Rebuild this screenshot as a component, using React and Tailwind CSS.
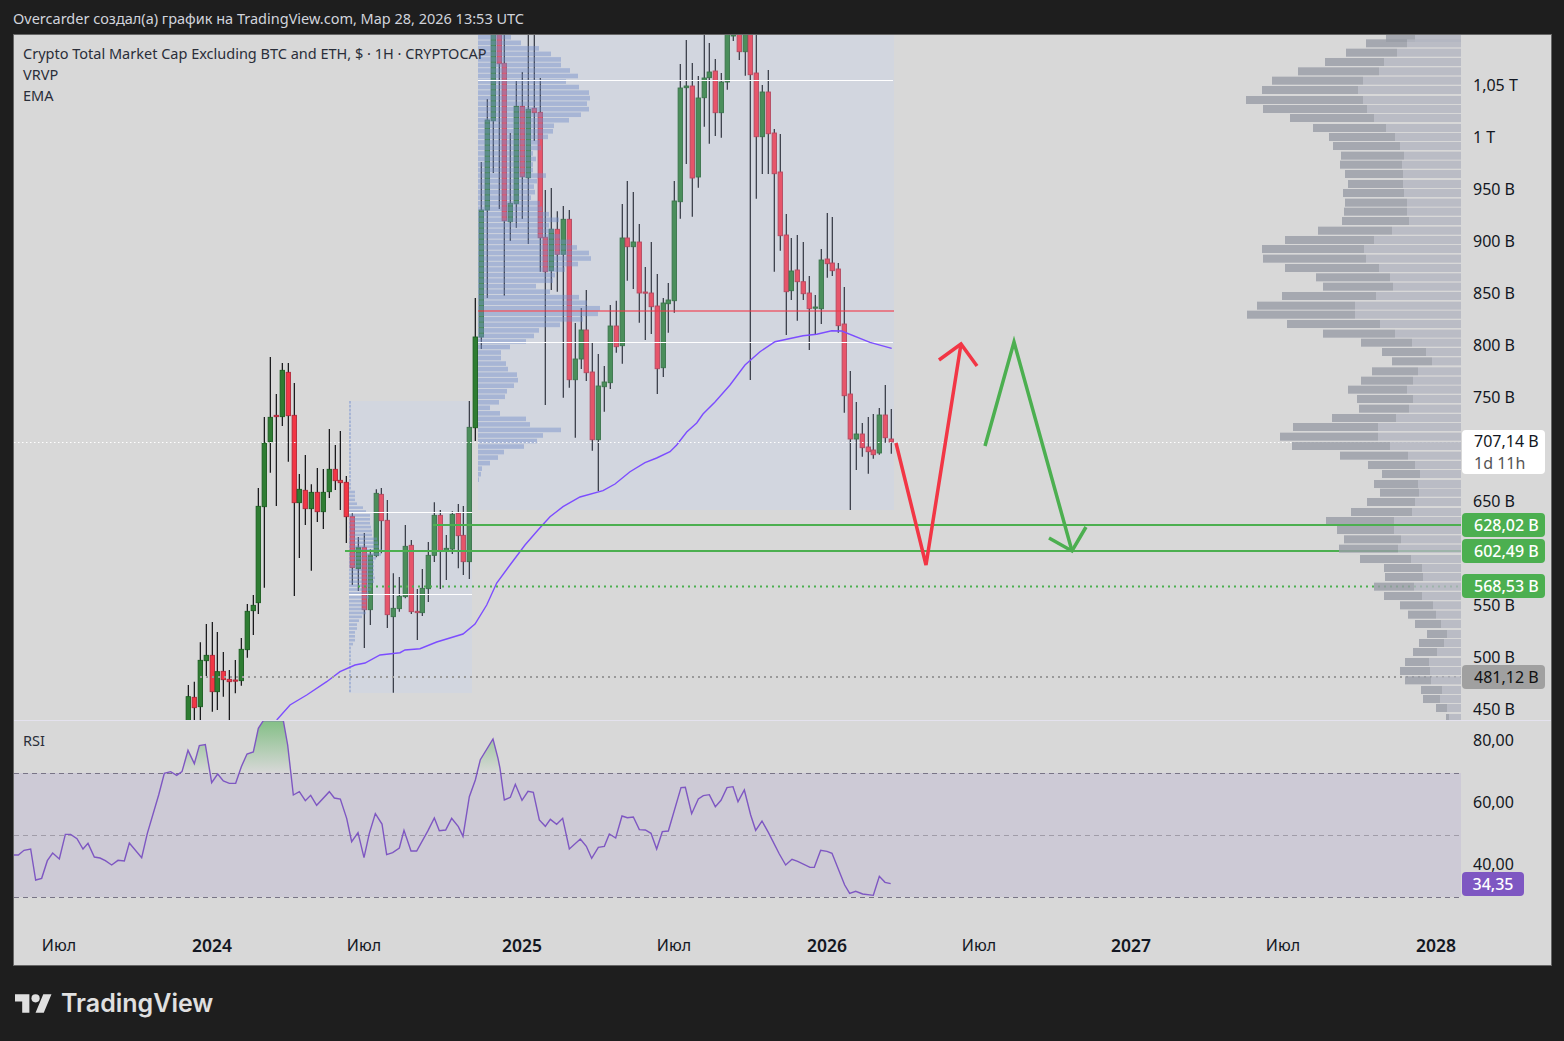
import React from 'react'

// early candles, read off at 3x: [x, wickTop, wickBottom, bodyTop, bodyBottom, colour]
const earlyRaw = [
  [25,1005,1120,1040,1120,'g'],[43,995,1120,1042,1073,'r'],[61,877,1120,931,1070,'g'],[79,822,978,916,932,'g'],
  [97,816,1085,916,1025,'r'],[112,846,1080,965,1025,'g'],[130,906,1040,964,989,'r'],[148,960,1120,988,995,'r'],
  [166,930,1030,990,992,'r'],[184,864,1007,898,992,'g'],[202,762,923,784,899,'g'],[220,735,855,766,782,'g'],
  [235,414,792,469,758,'g'],[253,201,713,279,470,'g'],[271,21,368,202,275,'g'],[289,132,468,196,200,'r'],
  [307,39,228,61,200,'g'],[325,39,335,67,197,'r'],[343,99,738,196,458,'r'],[358,372,624,418,458,'g'],
  [376,315,525,421,476,'r'],[394,403,662,427,476,'g'],[412,354,516,427,485,'r'],[430,357,537,427,485,'g'],
  [448,237,444,358,425,'g'],[466,285,420,358,392,'r'],[481,243,480,391,398,'r'],[499,378,579,397,500,'r'],
  [517,490,705,499,653,'r'],[535,561,723,592,656,'g'],[553,549,894,592,779,'r'],[571,598,825,615,779,'g'],
  [589,418,622,430,617,'g'],[604,414,610,433,512,'r'],[622,450,834,511,794,'r'],[640,670,1028,775,800,'g'],
  [658,681,785,739,776,'g'],[676,525,745,589,740,'g'],[694,570,792,586,785,'r'],[712,717,870,784,788,'r'],
  [727,657,798,715,788,'g'],[745,576,756,616,716,'g'],[763,457,636,496,616,'g'],[781,480,717,496,602,'r'],
  [799,555,690,595,602,'g'],[817,484,612,493,597,'g'],[835,462,655,490,557,'r'],[850,468,675,556,635,'r'],
  [868,153,687,232,635,'g'],
]
const early = earlyRaw.map(([x, a, b, c, d, k]) => [180 + x / 3, 350 + a / 3, 350 + b / 3, 350 + c / 3, 350 + d / 3, k])

const late = [
  [475.3,298,441,337,427.7,'g'],[481.3,162,349,210,337,'g'],[487.3,99,298,120,210,'g'],[493.3,0,173,0,120.7,'g'],
  [499.3,0,209,0,63.7,'r'],[504.3,0,295.7,63.3,220.7,'r'],[510.3,133,241,203.3,221.7,'g'],[516.3,81,227.7,106.3,203.7,'g'],
  [522.3,72,219,106.3,176.7,'r'],[528.3,0,244,109.3,177.7,'g'],[534.3,0,141,108.3,112.7,'r'],[540.3,78,271.7,112.3,237.7,'r'],
  [545.3,190,405,237.3,271.7,'r'],[551.3,188,290,229.3,270.7,'g'],[557.3,211.3,291.7,229.3,254.3,'r'],[563.3,206,397.7,219.3,254.3,'g'],
  [569.3,210,387.7,219.3,379.7,'r'],[575.3,323,437.7,359,379.7,'g'],[581.3,308,369,330,359,'g'],[586.3,290,381,330,372.7,'r'],
  [592.3,343,450.7,372,439.7,'r'],[598.3,354,491,386,439.7,'g'],[604.3,366,411.7,382,386.7,'g'],[610.3,305,389,326,382.7,'g'],
  [616.3,300.7,352.7,326,346.7,'r'],[622.3,204,363.7,238,345.7,'g'],[627.3,181,280.7,238,246.7,'r'],[633.3,192,289,242,246.7,'g'],
  [639.3,224,322.7,242,293,'r'],[645.3,267,340,292,293,'r'],[651.3,242,334,293,306.7,'r'],[657.3,274,394,306,368.7,'r'],
  [663.3,298,377,303,367.7,'g'],[668.3,283,332.7,300,303.7,'g'],[674.3,181,312.7,201,300.7,'g'],[680.3,64,218.7,88,201.7,'g'],
  [686.3,40,164,86,87.7,'g'],[692.3,63,216.7,86,178,'r'],[698.3,76,187.7,98,177,'g'],[704.3,34,126.7,78,97.7,'g'],
  [709.3,43,143.7,72,77.7,'g'],[715.3,59,136,71,112.7,'r'],[721.3,73,137.7,82,112.7,'g'],[727.3,0,89.7,0,82,'g'],
  [733.3,0,41,0,36,'g'],[739.3,0,60,0,51.7,'r'],[745.3,0,75.7,0,51.7,'g'],[750.3,0,380,0,74.7,'r'],
  [756.3,0,198.7,73,136.7,'r'],[762.3,85,174,92,136.7,'g'],[768.3,70,174,92,133.7,'r'],[774.3,129,271.7,133,173.7,'r'],
  [780.3,134,250.7,172,235.7,'r'],[786.3,214,335,235,291.7,'r'],[791.3,238,300,271,290.7,'g'],[797.3,235,320.7,270,281.7,'r'],
  [803.3,242,300,281.7,293.7,'r'],[809.3,276,350,293,308.7,'r'],[815.3,295,335,307,308,'g'],[821.3,249,324,260,308.7,'g'],
  [827.3,213,277.7,259,263.7,'r'],[832.3,217,276,263,270.7,'r'],[838.3,263,332.7,269,325.7,'r'],[844.3,287,412.7,324,395.7,'r'],
  [850.3,371,510,394,439,'r'],[856.3,402,470,434,439,'g'],[862.3,423,456.7,434,447.7,'r'],[868.3,417,473.7,447,451.7,'r'],
  [873.3,414,458.7,450,454.7,'r'],[879.3,408,454.7,415,453,'g'],[885.3,385,442.7,415,437.7,'r'],[891.3,409,453.7,439,442,'r'],
]
const candles = [...early, ...late]

const vrvpWidths = [33,43,61,73,83,83,92,100,88,101,111,112,109,111,103,91,76,75,70,62,63,55,58,55,55,68,59,56,57,53,62,64,71,81,71,76,82,93,99,111,113,100,87,77,75,58,72,101,109,122,120,105,82,61,56,48,32,23,23,28,30,39,40,36,29,27,21,12,22,48,52,83,65,59,46,26,20,12,4,3,1]

const vrvpSmall = [6,6,6,8,14,17,21,21,21,22,23,23,28,29,30,33,32,27,25,25,25,25,26,25,22,22,20,20,17,17,17,17,13,10,8,8,6,6,6,4,2]

// right side volume profile: [y, left, split] at 3x from x=1240
const volTop = [[28,378,501],[56,318,471],[84,255,432],[112,174,417],[140,96,369],[168,66,354],[198,18,369],[225,69,381],[252,150,402],[282,219,438],[309,267,465],[336,279,480],[365,303,492],[392,300,486],[420,315,489],[450,324,489],[477,309,492],[506,315,501],[533,312,501],[561,306,507],[590,234,456],[618,135,402],[645,66,372],[674,69,378],[702,135,417],[730,228,450],[758,249,459],[786,126,408],[815,51,345],[842,21,345],[870,141,420],[899,249,465],[926,363,516],[954,426,558],[982,456,576],[1012,396,534],[1040,363,519],[1067,324,501],[1095,351,519]]
const volBottom = [[14,357,507],[42,276,468],[69,159,414],[98,120,414],[126,156,450],[155,300,504],[183,384,525],[210,426,540],[240,402,534],[266,420,537],[294,381,525],[324,333,516],[351,258,462],[378,291,462],[406,312,483],[434,297,474],[465,360,513],[492,432,546],[519,435,549],[548,402,522],[576,432,546],[604,480,579],[632,504,588],[660,525,603],[690,561,621],[717,537,612],[744,519,591],[774,495,567],[801,480,570],[829,495,573],[858,543,606],[885,549,600],[912,588,621],[942,618,627]]
const vol = [
  [34, 438, 525],
  ...volTop.map(([y, l, s]) => [30 + y / 3, l, s]),
  ...volBottom.map(([y, l, s]) => [400 + y / 3, l, s]),
]

const ema = '276.7,720 290,705 306.7,695 326.7,681.7 340,671.7 355,665 365,663 380,655 400,652.7 405,650 420,648.7 436.7,642 463,634 475,624 486.7,605 496.7,583 510,565 525,545 538,530 550,516.7 563,506.7 580,497 603,490.7 615,484 630,471.7 645,462.7 656.7,458 670,451.7 676.7,445 686.7,432 696.7,423 703,414 715,402 730,385 745,365 760,351.7 775,341.7 803,335.7 816.7,334.3 831.7,330.7 841.7,331 870,342.3 891.7,348.3'

const rsiLeft = [[40,420],[55,420],[72,406],[92,402],[107,495],[125,490],[142,437],[158,414],[178,432],[196,358],[212,358],[231,371],[249,402],[264,385],[283,426],[300,429],[316,437],[335,450],[354,436],[373,438],[388,384],[425,428],[442,355],[476,240],[493,175],[512,170],[530,181],[546,170],[564,106],[583,146],[598,92],[616,89],[635,203],[653,177],[670,198],[688,205],[707,205],[724,155],[741,117],[760,111],[775,40],[790,17],[850,17],[863,90],[880,240],[898,230],[916,257],[932,241],[950,271],[988,230],[1003,249],[1021,252],[1040,310],[1055,380],[1074,353],[1092,428],[1108,355],[1126,296],[1146,327],[1160,419],[1178,413],[1198,399],[1212,346],[1233,408],[1250,408],[1284,347],[1303,309],[1318,347],[1337,345],[1355,310],[1375,335],[1389,364],[1408,245],[1426,195],[1441,134],[1479,72],[1494,130]]
const rsiRight = [[0,160],[13,255],[31,247],[46,208],[66,256],[84,229],[100,232],[118,315],[136,334],[151,313],[170,328],[188,310],[208,402],[241,372],[259,394],[275,430],[295,397],[313,394],[328,357],[347,369],[366,303],[382,308],[400,306],[418,344],[436,345],[453,355],[470,402],[487,350],[505,348],[543,218],[556,217],[575,296],[595,252],[610,242],[628,239],[646,275],[663,256],[681,218],[699,215],[714,260],[733,225],[752,300],[767,346],[786,318],[805,352],[838,417],[857,450],[876,433],[893,439],[930,457],[943,457],[962,406],[981,409],[996,415],[1034,510],[1049,535],[1067,529],[1088,537],[1120,541],[1138,484],[1155,502],[1172,506]]
const rsiPoints = [
  ...rsiLeft.map(([x, y]) => [x / 3, 715 + y / 3]),
  ...rsiRight.map(([x, y]) => [500 + x / 3, 715 + y / 3]),
]
const rsiLine = rsiPoints.map((p) => p.join(',')).join(' ')
const rsiArea = `${rsiPoints[0][0]},773 ${rsiLine} ${rsiPoints[rsiPoints.length - 1][0]},773`

const priceLabels = [
  ['1,05 T', 85], ['1 T', 137], ['950 B', 189], ['900 B', 241], ['850 B', 293], ['800 B', 345],
  ['750 B', 397], ['650 B', 501], ['550 B', 605], ['500 B', 657], ['450 B', 709],
]
const priceTags = [
  ['628,02 B', 513, 'bg-[#4caf50] text-white font-medium'],
  ['602,49 B', 539, 'bg-[#4caf50] text-white font-medium'],
  ['568,53 B', 574, 'bg-[#4caf50] text-white font-medium'],
  ['481,12 B', 665, 'bg-[#a0a0a0] text-[#111]'],
]
const rsiLabels = [['80,00', 740], ['60,00', 802], ['40,00', 864]]
const timeLabels = [
  ['Июл', 59], ['2024', 212, true], ['Июл', 364], ['2025', 522, true], ['Июл', 674], ['2026', 827, true],
  ['Июл', 979], ['2027', 1131, true], ['Июл', 1283], ['2028', 1436, true],
]

const Candle = ({ c }) => {
  const [x, wickTop, wickBottom, bodyTop, bodyBottom, kind] = c
  const green = kind === 'g'
  return (
    <g>
      <line x1={x} x2={x} y1={wickTop} y2={wickBottom} stroke="#0d0d10" strokeWidth="1.2" />
      <rect
        x={x - 2.2}
        y={bodyTop}
        width="4.4"
        height={Math.max(bodyBottom - bodyTop, 1.2)}
        fill={green ? '#2e7d32' : '#f23645'}
        stroke={green ? '#1b5e20' : '#b2283a'}
        strokeWidth="0.9"
      />
    </g>
  )
}

const MainChart = () => (
  <svg className="block shrink-0 w-[1447px] h-[685px]" viewBox="14 35 1447 685">
    {candles.map((c, i) => <Candle key={i} c={c} />)}

    <rect x="478" y="35" width="416" height="475" fill="rgba(191,211,255,0.2)" />
    <rect x="349" y="401" width="123" height="292" fill="rgba(191,211,255,0.2)" />

    {vrvpWidths.map((w, i) => (
      <rect key={i} x="478" y={35 + i * 5.53} width={w} height="4.6" fill="rgba(115,142,202,0.45)" />
    ))}
    {Array.from({ length: 75 }).map((_, i) => {
      const y = 401 + i * 3.9
      const w = y >= 489 && y < 649 ? vrvpSmall[Math.floor((y - 489) / 3.9)] || 2 : 2
      return <rect key={i} x="349" y={y} width={w} height="2.6" fill="rgba(115,142,202,0.45)" />
    })}

    <line x1="478" x2="893" y1="80.5" y2="80.5" stroke="#fff" />
    <line x1="478" x2="893" y1="342.5" y2="342.5" stroke="#fff" />
    <line x1="349" x2="472" y1="512.5" y2="512.5" stroke="#fff" />
    <line x1="349" x2="472" y1="594.5" y2="594.5" stroke="#fff" />
    <line x1="478" x2="894" y1="311" y2="311" stroke="#f23645" strokeOpacity="0.55" strokeWidth="2" />
    <polyline points={ema} fill="none" stroke="#7c4dff" strokeWidth="1.4" />

    <line x1="14" x2="1461" y1="442.5" y2="442.5" stroke="#fff" strokeDasharray="1.5 2.5" />
    <line x1="345" x2="1461" y1="551" y2="551" stroke="#4caf50" strokeWidth="2" />
    <line x1="358" x2="1461" y1="586.5" y2="586.5" stroke="#4caf50" strokeWidth="2" strokeDasharray="2 4" />
    <line x1="200" x2="1461" y1="677" y2="677" stroke="#999" strokeWidth="2" strokeDasharray="2 4" />

    {vol.map(([y, left, split], i) => (
      <g key={i}>
        <rect x={1240 + left / 3} y={y} width={(split - left) / 3} height="8" fill="rgba(152,156,166,0.8)" />
        <rect x={1240 + split / 3} y={y} width={221 - split / 3} height="8" fill="rgba(179,181,192,0.8)" />
      </g>
    ))}

    <line x1="433" x2="1461" y1="525" y2="525" stroke="#4caf50" strokeWidth="2" />

    <polyline points="896,443 926,565 961,344" fill="none" stroke="#f23645" strokeWidth="3.5" />
    <polyline points="939,360 961,344 977,366" fill="none" stroke="#f23645" strokeWidth="3.5" />
    <polyline points="985,446 1014,342 1072,551" fill="none" stroke="#4caf50" strokeWidth="3.5" />
    <polyline points="1049,538 1072,551 1086,527" fill="none" stroke="#4caf50" strokeWidth="3.5" />
  </svg>
)

const RsiChart = () => (
  <svg className="block shrink-0 w-[1447px] h-[204px]" viewBox="14 721 1447 204">
    <defs>
      <linearGradient id="rsiUp" gradientUnits="userSpaceOnUse" x1="0" x2="0" y1="721" y2="773">
        <stop offset="0" stopColor="#4caf50" stopOpacity="0.6" />
        <stop offset="1" stopColor="#4caf50" stopOpacity="0" />
      </linearGradient>
      <clipPath id="rsiClip">
        <rect x="14" y="721" width="1447" height="52" />
      </clipPath>
    </defs>
    <rect x="14" y="773" width="1447" height="124" fill="#cdcad6" />
    <polygon points={rsiArea} fill="url(#rsiUp)" clipPath="url(#rsiClip)" />
    <line x1="14" x2="1461" y1="773.5" y2="773.5" stroke="#787486" strokeDasharray="5 4" />
    <line x1="14" x2="1461" y1="835.5" y2="835.5" stroke="#a09ca8" strokeDasharray="5 4" />
    <line x1="14" x2="1461" y1="897.5" y2="897.5" stroke="#787486" strokeDasharray="5 4" />
    <polyline points={rsiLine} fill="none" stroke="#7e57c2" strokeWidth="1.4" />
  </svg>
)

const PriceAxis = () => (
  <div className="relative w-[90px] h-[685px]">
    {priceLabels.map(([text, y]) => (
      <span key={text} className="absolute left-[12px] text-[#131722] leading-5" style={{ top: y - 45 }}>{text}</span>
    ))}
    <div className="absolute left-px top-[395px] w-[83px] h-[44px] rounded-sm bg-white pl-3 leading-[22px] text-[#131722]">
      707,14 B
      <div className="text-[#555]">1d 11h</div>
    </div>
    {priceTags.map(([text, y, cls]) => (
      <div key={text} className={`absolute left-px w-[83px] h-[24px] rounded-sm pl-3 leading-6 ${cls}`} style={{ top: y - 35 }}>{text}</div>
    ))}
  </div>
)

const RsiAxis = () => (
  <div className="relative w-[90px] h-[204px]">
    {rsiLabels.map(([text, y]) => (
      <span key={text} className="absolute left-[12px] text-[#131722] leading-5" style={{ top: y - 731 }}>{text}</span>
    ))}
    <div className="absolute left-px top-[151px] w-[62px] h-[24px] rounded-sm bg-[#7e57c2] text-center font-medium leading-6 text-white">34,35</div>
  </div>
)

const TimeAxis = () => (
  <div className="relative h-[40px]">
    {timeLabels.map(([text, x, bold]) => (
      <span
        key={x}
        className={`absolute top-[10px] -translate-x-1/2 leading-5 text-[#131722] ${bold ? 'font-semibold text-[17.5px]' : ''}`}
        style={{ left: x - 14 }}
      >
        {text}
      </span>
    ))}
  </div>
)

export default function App() {
  return (
    <div className="w-[1564px] h-[1041px] flex flex-col bg-[#1e1e1e] px-[13px] font-['Noto_Sans',sans-serif] text-base overflow-hidden">
      <div className="h-[34px] flex items-center pt-[4px] text-[14.5px] text-[#d1d4dc]">
        Overcarder создал(а) график на TradingView.com, Мар 28, 2026 13:53 UTC
      </div>

      <div className="w-[1539px] h-[932px] border border-[#666] bg-[#d8d8d8]">
        <div className="relative flex">
          <MainChart />
          <PriceAxis />
          <div className="absolute left-[9px] top-[8px] text-[14.5px] leading-[21px] text-[#2a2e39]">
            <div>Crypto Total Market Cap Excluding BTC and ETH, $ · 1H · CRYPTOCAP</div>
            <div>VRVP</div>
            <div>EMA</div>
          </div>
        </div>
        <div className="h-px bg-[#e4e2ee]" />
        <div className="relative flex">
          <RsiChart />
          <RsiAxis />
          <div className="absolute left-[9px] top-[9px] text-[14.5px] leading-5 text-[#2a2e39]">RSI</div>
        </div>
        <TimeAxis />
      </div>

      <div className="flex items-center gap-[9px] pl-[2px] pt-[23px]">
        <svg className="w-[37px] h-[19px]" viewBox="0 4 36 18" fill="#e0e0e0">
          <path d="M14 22H7V11H0V4h14v18zM28 22h-8l7.5-18h8L28 22z" />
          <circle cx="20" cy="8" r="4" />
        </svg>
        <span className="font-['Inter',sans-serif] text-[25px] font-semibold leading-[28px] text-[#e0e0e0]">TradingView</span>
      </div>
    </div>
  )
}
